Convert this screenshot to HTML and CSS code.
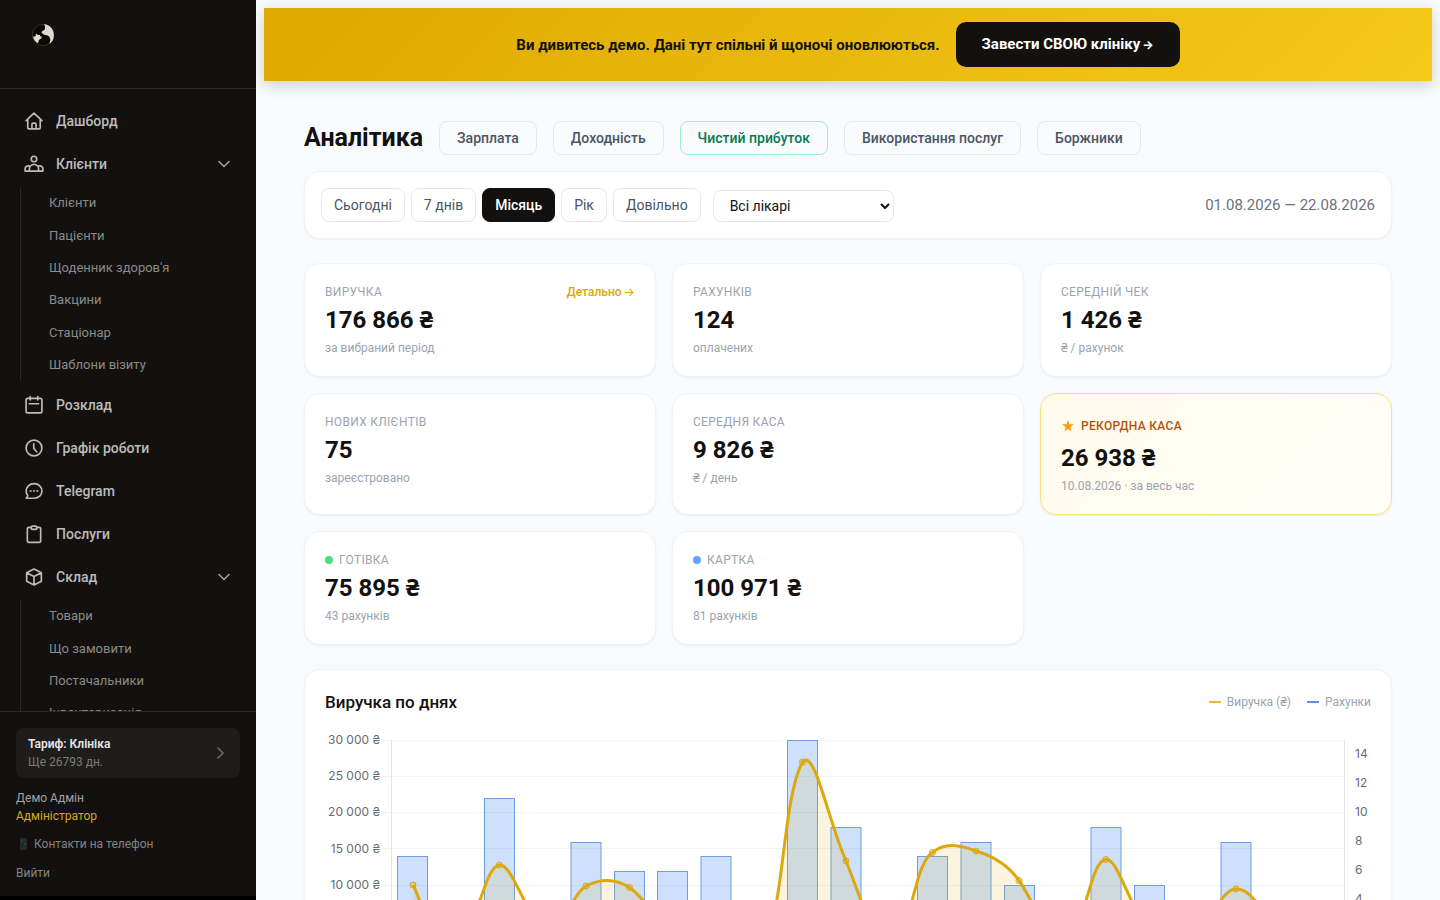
FILE: index.html
```html
<!DOCTYPE html>
<html lang="uk">
<head>
<meta charset="utf-8">
<meta name="viewport" content="width=device-width, initial-scale=1">
<title>Аналітика</title>
<link rel="stylesheet" href="styles.css">
</head>
<body>
<div class="app">
  <aside class="sidebar">
    <div class="brand">
      <svg class="logo" viewBox="0 0 22 22" aria-hidden="true">
        <circle cx="11" cy="11" r="10.6" fill="#090909" stroke="#4a4945" stroke-width=".6"/>
        <path fill="#ddd9d0" d="M12 .3C18 .6 22 5.400 21.900 11.400c0 3.600-1.700 6.800-4.600 8.700 1-2.400 1.500-5 .2-7.200-1.200-2.100-4-1.400-5.800-2.500-1.200-.8-2.400-1.700-2.100-2.400.6-1.100 2.100-1.200 2.900-2.200C13.500 4.500 13.200 2.300 12 .3z"/>
        <path fill="#e8dcc2" d="M1 12.700c1-.2 2.200-.1 2.600-.6l.5-2.500 1.800 1.500 2-.1.300 1.200 1.600.6c-.1 1.500-1.200 2.100-2.300 2.600-1 .6-.9 2-1.400 3.800C3.600 18 1.700 15.600 1 12.700z"/>
      </svg>
    </div>
    <nav class="nav">
      <a class="nav-item" href="#">
        <svg class="icon" viewBox="0 0 24 24"><path d="M2.500 11.500 12 2.500l9.500 9M4.500 10v10a1.500 1.500 0 0 0 1.500 1.500h12a1.500 1.500 0 0 0 1.500-1.500V10M9.500 21.500V16a1.500 1.500 0 0 1 1.500-1.500h2a1.500 1.500 0 0 1 1.500 1.500v5.500"/></svg>
        <span>Дашборд</span>
      </a>
      <button class="nav-item" type="button">
        <svg class="icon" viewBox="0 0 24 24"><circle cx="12" cy="6" r="3.300"/><path d="M6.500 20.500V18a5.500 5.500 0 0 1 11 0v2.500zM6.700 14.500c-3.200-.7-5.400 1-5.400 3.500v2.500h5.200M17.300 14.500c3.200-.7 5.400 1 5.400 3.500v2.500h-5.200"/></svg>
        <span>Клієнти</span>
        <svg class="chevron" viewBox="0 0 16 16"><path d="m3 5.500 5 5 5-5"/></svg>
      </button>
      <div class="subnav">
        <a href="#">Клієнти</a><a href="#">Пацієнти</a><a href="#">Щоденник здоров'я</a><a href="#">Вакцини</a><a href="#">Стаціонар</a><a href="#">Шаблони візиту</a>
      </div>
      <a class="nav-item" href="#">
        <svg class="icon" viewBox="0 0 24 24"><rect x="2.500" y="4" width="19" height="17.500" rx="2"/><path d="M7.500 2v4M16.500 2v4M6.500 10.500h11"/></svg>
        <span>Розклад</span>
      </a>
      <a class="nav-item" href="#">
        <svg class="icon" viewBox="0 0 24 24"><circle cx="12" cy="12" r="9.500"/><path d="M11.700 7v5.500l3.500 4"/></svg>
        <span>Графік роботи</span>
      </a>
      <a class="nav-item" href="#">
        <svg class="icon" viewBox="0 0 24 24"><path d="M2.700 20.700h9.500c5.500 0 9.300-3.700 9.300-8.700s-4-8.800-9.400-8.800S2.600 7 2.600 12c0 2.300.7 4.200 2 5.800z"/><path d="M7.500 12h1M11.500 12h1M15.500 12h1"/></svg>
        <span>Telegram</span>
      </a>
      <a class="nav-item" href="#">
        <svg class="icon" viewBox="0 0 24 24"><path d="M8.500 4H6a2 2 0 0 0-2 2v14a2 2 0 0 0 2 2h12a2 2 0 0 0 2-2V6a2 2 0 0 0-2-2h-2.500"/><rect x="8.500" y="2.500" width="7" height="4" rx="2"/></svg>
        <span>Послуги</span>
      </a>
      <button class="nav-item" type="button">
        <svg class="icon" viewBox="0 0 24 24"><path d="M12 2.500 20.800 7v10L12 21.500 3.200 17V7zM3.200 7 12 11.500 20.800 7M12 11.500v10"/></svg>
        <span>Склад</span>
        <svg class="chevron" viewBox="0 0 16 16"><path d="m3 5.500 5 5 5-5"/></svg>
      </button>
      <div class="subnav">
        <a href="#">Товари</a><a href="#">Що замовити</a><a href="#">Постачальники</a><a href="#">Інвентаризація</a>
      </div>
    </nav>
    <div class="account">
      <a class="plan" href="#">
        <span><strong>Тариф: Клініка</strong><small>Ще 26793 дн.</small></span>
        <svg class="chevron" viewBox="0 0 16 16"><path d="m6 3 5 5-5 5"/></svg>
      </a>
      <div class="user"><span>Демо Адмін</span><span class="role">Адміністратор</span></div>
      <a class="account-link" href="#"><svg class="phone" viewBox="0 0 14 14" aria-hidden="true"><rect x="4" y="1" width="7" height="12" rx="1" fill="#25292a"/><path d="M5 3h5v7H5z" fill="#15302e"/><path d="M5 3h2v2H5zM8 6h2v2H8z" fill="#353a39"/></svg>Контакти на телефон</a>
      <button class="account-link" type="button">Вийти</button>
    </div>
  </aside>

  <main class="main">
    <div class="banner">
      <span>Ви дивитесь демо. Дані тут спільні й щоночі оновлюються.</span>
      <a href="#">Завести СВОЮ клініку<span class="arrow">→</span></a>
    </div>
    <div class="content">
      <header class="heading">
        <h1>Аналітика</h1>
        <a class="tab" href="#">Зарплата</a>
        <a class="tab" href="#">Доходність</a>
        <a class="tab tab-green" href="#">Чистий прибуток</a>
        <a class="tab" href="#">Використання послуг</a>
        <a class="tab" href="#">Боржники</a>
      </header>

      <section class="card filters">
        <div class="periods">
          <button type="button">Сьогодні</button>
          <button type="button">7 днів</button>
          <button type="button" class="active">Місяць</button>
          <button type="button">Рік</button>
          <button type="button">Довільно</button>
        </div>
        <select aria-label="Лікар"><option>Всі лікарі</option></select>
        <span class="range">01.08.2026 — 22.08.2026</span>
      </section>

      <section class="stats">
        <article class="card stat"><div class="label">Виручка<a href="#">Детально<span class="arrow">→</span></a></div><div class="value">176 866 ₴</div><div class="note">за вибраний період</div></article>
        <article class="card stat"><div class="label">Рахунків</div><div class="value">124</div><div class="note">оплачених</div></article>
        <article class="card stat"><div class="label">Середній чек</div><div class="value">1 426 ₴</div><div class="note">₴ / рахунок</div></article>
        <article class="card stat"><div class="label">Нових клієнтів</div><div class="value">75</div><div class="note">зареєстровано</div></article>
        <article class="card stat"><div class="label">Середня каса</div><div class="value">9 826 ₴</div><div class="note">₴ / день</div></article>
        <article class="card stat record"><div class="label"><svg class="star" viewBox="0 0 14 14" aria-hidden="true"><path d="m7 1 1.500 4.300H13L9.400 8l1.300 4.400L7 9.800l-3.700 2.600L4.600 8 1 5.300h4.500z"/></svg>Рекордна каса</div><div class="value">26 938 ₴</div><div class="note">10.08.2026 · за весь час</div></article>
        <article class="card stat"><div class="label"><i class="dot green"></i>Готівка</div><div class="value">75 895 ₴</div><div class="note">43 рахунків</div></article>
        <article class="card stat"><div class="label"><i class="dot blue"></i>Картка</div><div class="value">100 971 ₴</div><div class="note">81 рахунків</div></article>
      </section>

      <section class="card chart-card">
        <div class="chart-head">
          <h2>Виручка по днях</h2>
          <div class="legend"><span><i class="dash gold"></i>Виручка (₴)</span><span><i class="dash azure"></i>Рахунки</span></div>
        </div>
        <svg class="chart" viewBox="0 0 1046 260" role="img" aria-label="Виручка по днях">
          <g class="grid"><path d="M58 10.500h961M58 46.500h961M58 82.500h961M58 118.500h961M58 155.500h961M58 191.500h961M58 227.500h961"/><path class="axis" d="M66.500 10v218M1019.500 10v218"/></g>
          <g class="bars">
            <rect x="72.500" y="126.500" width="30" height="101"/><rect x="116" y="184.500" width="30" height="43"/><rect x="159.500" y="68.500" width="30" height="159"/><rect x="202.500" y="170.500" width="30" height="57"/><rect x="246" y="112.500" width="30" height="115"/><rect x="289.500" y="141.500" width="30" height="86"/><rect x="332.500" y="141.500" width="30" height="86"/><rect x="376" y="126.500" width="30" height="101"/><rect x="462.500" y="10.500" width="30" height="217"/><rect x="506" y="97.500" width="30" height="130"/><rect x="549.500" y="170.500" width="30" height="57"/><rect x="592.500" y="126.500" width="30" height="101"/><rect x="636" y="112.500" width="30" height="115"/><rect x="679.500" y="155.500" width="30" height="72"/><rect x="766" y="97.500" width="30" height="130"/><rect x="809.500" y="155.500" width="30" height="72"/><rect x="896" y="112.500" width="30" height="115"/>
          </g>
          <g class="area"><path d="M88 155C96 168 104 215 131 215C152 205 158 137 174.500 135C184 133 196 166 218 208C236 208 245 166 261 156C275 149 290 148 304.500 157.500C318 167 325 180 347.500 205C362 215 376 200 391 200C406 200 420 212 434.500 212C458 212 456 70 477.500 32C490 18 502 87 521 131C535 165 545 205 564.500 212C586 212 588 134 607.500 122.500C620 112 635 115 651 121C668 126 683 135 694 150.500C706 166 722 212 737.500 212C761 205 764 130 781 129.500C792 128 800 165 824 203C838 212 852 208 867.500 208C882 208 893 159 911 159C925 158 938 180 954 205L997 210V227H88z"/></g>
          <path class="curve" d="M88 155C96 168 104 215 131 215C152 205 158 137 174.500 135C184 133 196 166 218 208C236 208 245 166 261 156C275 149 290 148 304.500 157.500C318 167 325 180 347.500 205C362 215 376 200 391 200C406 200 420 212 434.500 212C458 212 456 70 477.500 32C490 18 502 87 521 131C535 165 545 205 564.500 212C586 212 588 134 607.500 122.500C620 112 635 115 651 121C668 126 683 135 694 150.500C706 166 722 212 737.500 212C761 205 764 130 781 129.500C792 128 800 165 824 203C838 212 852 208 867.500 208C882 208 893 159 911 159C925 158 938 180 954 205L997 210"/>
          <g class="points"><circle cx="88" cy="155" r="3"/><circle cx="174.500" cy="135" r="3"/><circle cx="261" cy="156" r="3"/><circle cx="304.500" cy="157.500" r="3"/><circle cx="477.500" cy="32" r="3"/><circle cx="521" cy="131" r="3"/><circle cx="607.500" cy="122.500" r="3"/><circle cx="651" cy="121" r="3"/><circle cx="694" cy="150.500" r="3"/><circle cx="781" cy="129.500" r="3"/><circle cx="911" cy="159" r="3"/></g>
          <g class="ticks left"><text x="55" y="14">30 000 ₴</text><text x="55" y="50">25 000 ₴</text><text x="55" y="86">20 000 ₴</text><text x="55" y="123">15 000 ₴</text><text x="55" y="159">10 000 ₴</text><text x="55" y="195">5 000 ₴</text><text x="55" y="231">0 ₴</text></g>
          <g class="ticks"><text x="1030" y="28">14</text><text x="1030" y="57">12</text><text x="1030" y="86">10</text><text x="1030" y="115">8</text><text x="1030" y="144">6</text><text x="1030" y="173">4</text><text x="1030" y="202">2</text><text x="1030" y="231">0</text></g>
        </svg>
      </section>
    </div>
  </main>
</div>
</body>
</html>
```
FILE: styles.css
```css
* { box-sizing: border-box; }
body {
  margin: 0;
  font-family: Roboto, "Noto Sans", sans-serif;
  font-size: 14px;
  line-height: 20px;
  color: #12110f;
  background: #f9fafc;
}
a { color: inherit; text-decoration: none; }
button { font: inherit; color: inherit; background: none; border: 0; padding: 0; text-align: left; cursor: pointer; }
h1, h2 { margin: 0; }
svg { flex: none; }
.arrow { margin-left: 2px; font-family: Inter, sans-serif; font-size: 12px; }

.app { display: flex; height: 100vh; overflow: hidden; }

/* Sidebar */
.sidebar {
  flex: none;
  display: flex;
  flex-direction: column;
  width: 256px;
  background: #12110f;
  border-bottom: 4px solid #000;
}
.brand { flex: none; height: 89px; padding: 24px 32px; border-bottom: 1px solid #2a2927; }
.logo { display: block; width: 22px; height: 22px; }
.nav { flex: 1; min-height: 0; overflow: hidden; display: flex; flex-direction: column; gap: 1px; padding: 11px 12px 0; }
.nav-item { flex: none; display: flex; align-items: center; gap: 12px; width: 100%; height: 42px; padding: 0 12px; font-weight: 500; color: #bdbcba; }
.icon { width: 20px; height: 20px; fill: none; stroke: #bdbcba; stroke-width: 2; stroke-linejoin: round; stroke-linecap: round; }
.chevron { width: 16px; height: 16px; margin-left: auto; fill: none; stroke: #a5a4a2; stroke-width: 1.500; stroke-linecap: round; stroke-linejoin: round; }
.subnav { flex: none; display: flex; flex-direction: column; margin: 1px 0 2px 8px; padding-left: 28px; border-left: 1px solid #2a2927; }
.subnav a { height: 32px; line-height: 32px; font-size: 13px; color: #8b8a88; }
.subnav a:nth-child(3n + 1) { height: 33px; }
.account { flex: none; padding: 16px 16px 14px; border-top: 1px solid #2a2927; font-size: 12px; line-height: 18px; color: #a3a2a0; }
.plan { display: flex; align-items: center; padding: 7px 12px; border-radius: 8px; background: #1e1d1b; }
.plan strong, .plan small { display: block; font-size: 12px; }
.plan strong { font-weight: 600; color: #e7e7e6; }
.plan small { color: #7b7a78; }
.plan .chevron { stroke: #6f6e6c; }
.user { display: flex; flex-direction: column; margin-top: 11px; }
.role { color: #d6a916; }
.account-link { display: flex; align-items: center; gap: 4px; margin-top: 10px; color: #858482; }
button.account-link { margin-top: 11px; }
.phone { width: 14px; height: 14px; }

/* Banner */
.main { flex: 1; min-width: 0; overflow-y: auto; scrollbar-width: none; padding: 8px; }
.banner {
  display: flex;
  justify-content: center;
  align-items: center;
  gap: 16px;
  padding: 14px 16px;
  background: linear-gradient(135deg, #dea800, #f5c91b);
  box-shadow: 0 4px 14px rgba(0, 0, 0, .18);
  font-size: 15px;
  font-weight: 700;
}
.banner a { padding: 12px 26px; border-radius: 10px; background: #12110f; color: #fff; line-height: 21px; }

/* Content */
.content { padding: 40px 40px 32px; }
.heading { display: flex; align-items: center; gap: 16px; margin-bottom: 16px; }
.heading h1 { font-size: 25px; line-height: 32px; font-weight: 700; }
.tab { padding: 6px 17px; border: 1px solid #e5e7eb; border-radius: 8px; color: #4b5563; font-weight: 500; }
.tab-green { border-color: #a2ebce; color: #057a55; }
.card { background: #fff; border: 1px solid #f1f2f4; border-radius: 16px; box-shadow: 0 1px 2px rgba(0, 0, 0, .06); }
.filters { display: flex; align-items: center; gap: 12px; padding: 16px; margin-bottom: 24px; }
.periods { display: flex; gap: 6px; }
.periods button { padding: 6px 12px; border: 1px solid #e5e7eb; border-radius: 8px; color: #4b5563; }
.periods .active { background: #12110f; border-color: #12110f; color: #fff; font-weight: 500; }
.filters select { align-self: flex-end; width: 181px; height: 32px; padding: 0 0 0 12px; border: 1px solid #e5e7eb; border-radius: 8px; background: #fff; color: #12110f; font: inherit; }
.range { margin-left: auto; font-size: 15px; color: #6b7280; }

.stats { display: grid; grid-template-columns: repeat(3, 1fr); gap: 16px; margin-bottom: 24px; }
.stat { padding: 20px; }
.label { display: flex; align-items: center; font-size: 12px; line-height: 16px; color: #9ca3af; text-transform: uppercase; letter-spacing: .3px; }
.label a { margin-left: auto; color: #dea800; text-transform: none; letter-spacing: normal; font-weight: 500; }
.value { margin: 4px 0; font-size: 24px; line-height: 32px; font-weight: 700; }
.note { font-size: 12px; line-height: 16px; color: #9ca3af; }
.record { background: linear-gradient(135deg, #fffbeb, #fffefa); border-color: #f8e17c; }
.record .label { line-height: 24px; color: #b45309; font-weight: 500; }
.star { width: 14px; height: 14px; margin-right: 6px; fill: #f59e0b; }
.dot { width: 8px; height: 8px; margin-right: 6px; border-radius: 50%; }
.green { background: #4ade80; }
.blue { background: #60a5fa; }

.chart-card { padding: 20px; }
.chart-head { display: flex; align-items: center; justify-content: space-between; margin-bottom: 16px; }
.chart-head h2 { font-size: 17px; line-height: 24px; font-weight: 500; }
.legend { display: flex; gap: 16px; font-size: 12px; color: #9ca3af; }
.legend span { display: flex; align-items: center; gap: 6px; }
.dash { width: 12px; height: 2px; }
.gold { background: #e5b93c; }
.azure { background: #5b94db; }
.chart { display: block; width: 100%; height: auto; }
.grid path { fill: none; stroke: #f1f3f5; }
.grid .axis { stroke: #e2e4e7; }
.bars rect { fill: rgba(59, 130, 246, .25); stroke: #6b9fdf; }
.area { fill: rgba(222, 168, 0, .13); }
.curve { fill: none; stroke: #dca90c; stroke-width: 3; }
.points circle { fill: rgba(222, 168, 0, .3); stroke: #dca90c; }
.ticks { font-family: Inter, sans-serif; font-size: 12px; fill: #666b73; }
.left { text-anchor: end; }
```
